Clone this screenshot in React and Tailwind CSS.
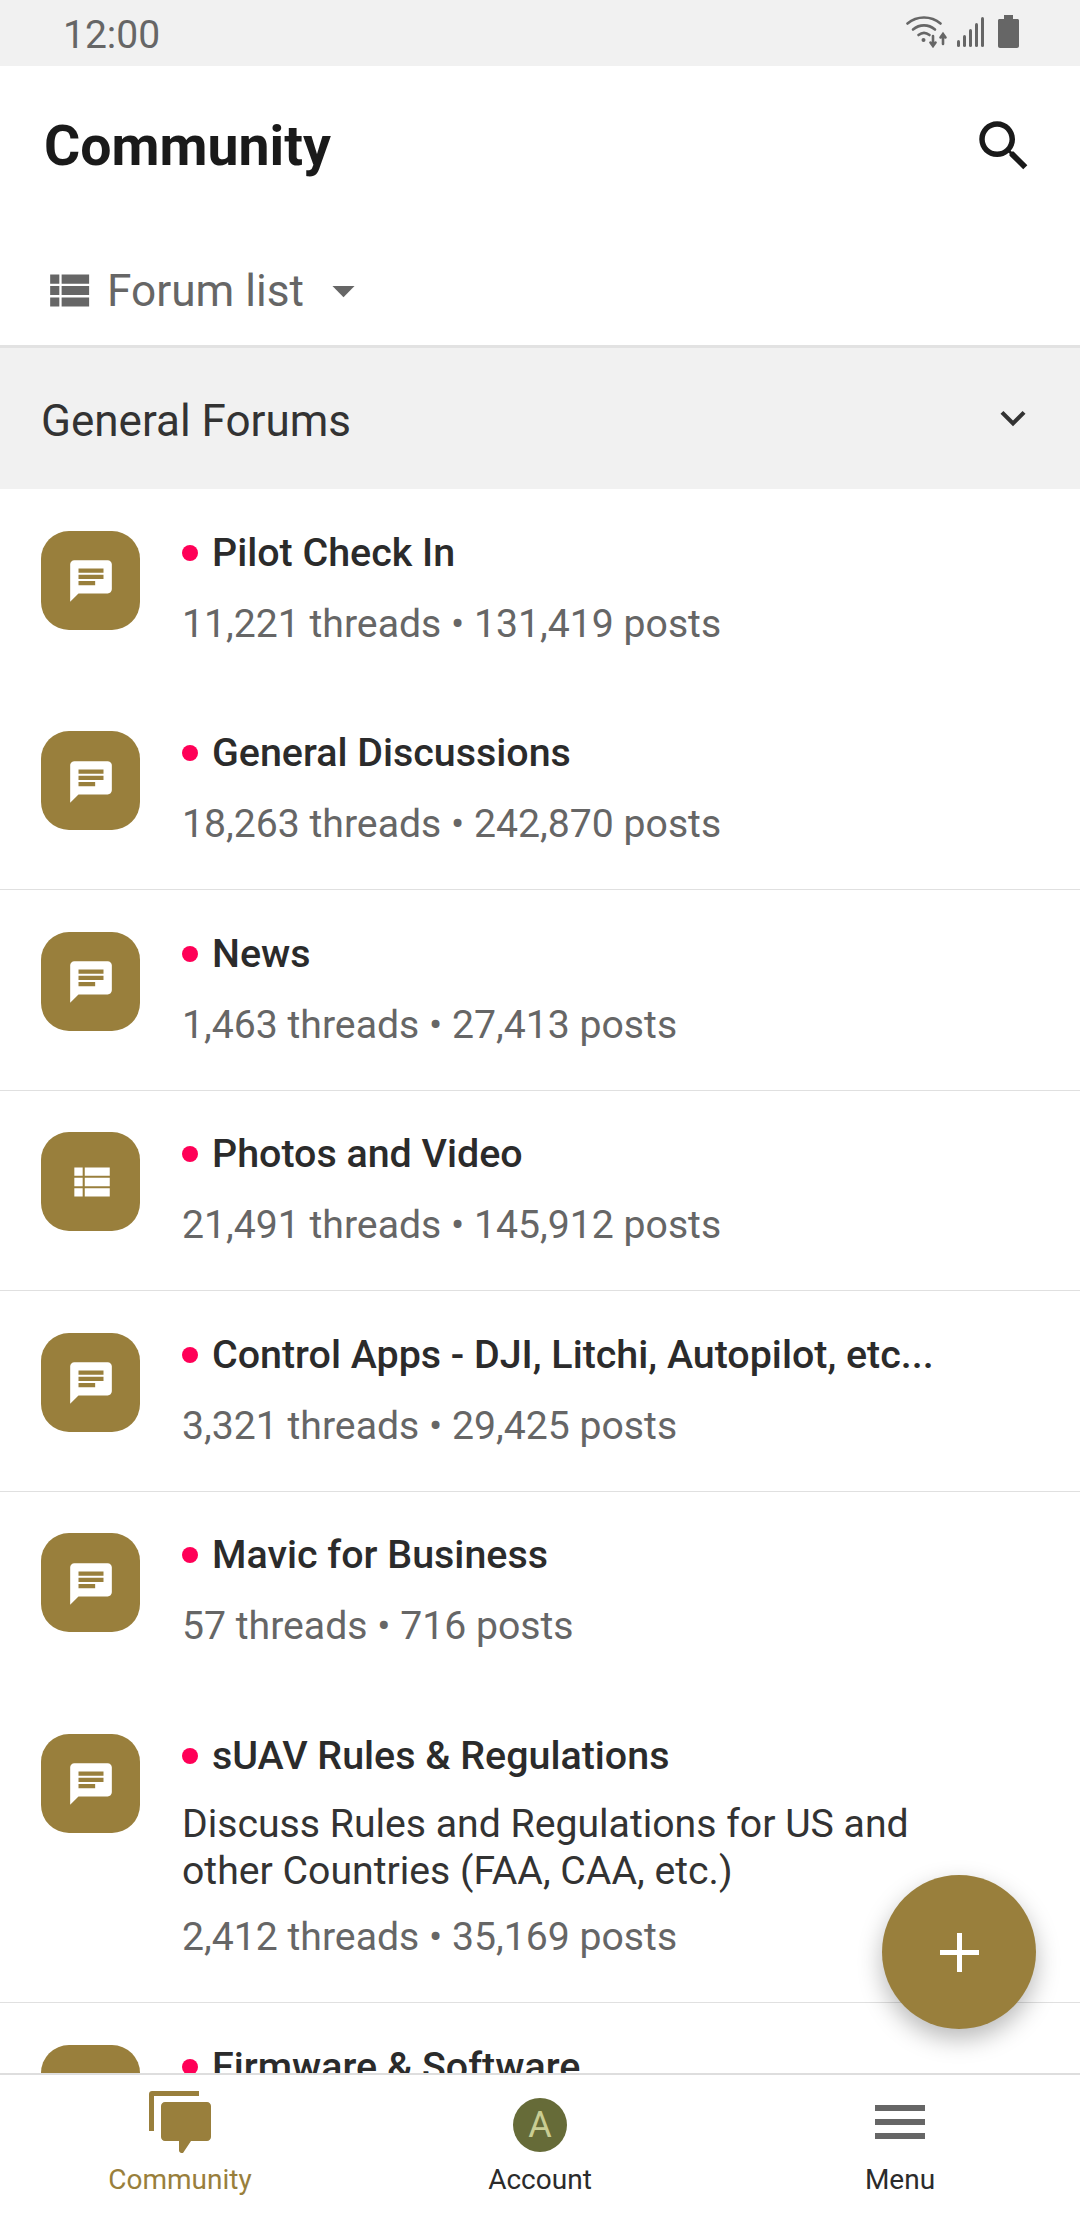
import React from 'react';

const GOLD = 'bg-[#997f3c]';

const forums = [
  { title: 'Pilot Check In', stats: '11,221 threads • 131,419 posts', border: false },
  { title: 'General Discussions', stats: '18,263 threads • 242,870 posts', border: true },
  { title: 'News', stats: '1,463 threads • 27,413 posts', border: true },
  { title: 'Photos and Video', stats: '21,491 threads • 145,912 posts', border: true, list: true },
  { title: 'Control Apps - DJI, Litchi, Autopilot, etc...', stats: '3,321 threads • 29,425 posts', border: true },
  { title: 'Mavic for Business', stats: '57 threads • 716 posts', border: false },
  {
    title: 'sUAV Rules & Regulations',
    description: 'Discuss Rules and Regulations for US and other Countries (FAA, CAA, etc.)',
    stats: '2,412 threads • 35,169 posts',
    border: true,
  },
  // cut off by the bottom nav, only the title shows
  { title: 'Firmware & Software', border: false },
];

const ChatIcon = () => (
  <svg viewBox="0 0 24 24" className="w-[50px] h-[50px] mt-[2px]" fill="#fff">
    <path d="M20 2H4c-1.1 0-1.99.9-1.99 2L2 22l4-4h14c1.1 0 2-.9 2-2V4c0-1.1-.9-2-2-2zM6 9h12v2H6V9zm8 5H6v-2h8v2zm4-6H6V6h12v2z" />
  </svg>
);

const ListIcon = ({ className, fill = '#fff' }) => (
  <svg viewBox="0 0 24 24" className={className} fill={fill}>
    <path d="M4 14h4v-4H4v4zm0 5h4v-4H4v4zM4 9h4V5H4v4zm5 5h12v-4H9v4zm0 5h12v-4H9v4zM9 5v4h12V5H9z" />
  </svg>
);

const StatusIcons = () => (
  <div className="flex items-start gap-[8px] pt-[15px]">
    <svg viewBox="0 0 42 33" className="w-[42px] h-[33px]" fill="none" stroke="#666" strokeWidth="2.6" strokeLinecap="round">
      <path d="M1.500 8.500C11 .5 25 .5 34.500 8.500" />
      <path d="M7 14.500c6.500-5.500 15.500-5.500 22 0" />
      <path d="M12.500 20c3.500-2.800 7.500-2.800 11 0" />
      <circle cx="17.500" cy="25" r="2" fill="#666" stroke="none" />
      <path d="M27 21v9M24.500 27.500L27 31l2.500-3.500" />
      <path d="M37 29v-9M34.500 22.500L37 19l2.500 3.500" />
    </svg>
    <svg viewBox="0 0 28 32" className="w-[28px] h-[32px] mt-px" fill="#666">
      <rect x="1" y="24" width="3" height="7" rx="1.500" />
      <rect x="7" y="19" width="3" height="12" rx="1.500" />
      <rect x="13" y="13" width="3" height="18" rx="1.500" />
      <rect x="19" y="7" width="3" height="24" rx="1.500" />
      <rect x="25" y="1" width="3" height="30" rx="1.500" />
    </svg>
    <svg viewBox="0 0 21 33" className="w-[21px] h-[33px] ml-[6px]" fill="#666">
      <path d="M6 0h9v4h4.500c.8 0 1.500.7 1.500 1.500V31c0 1.100-.9 2-2 2H2c-1.100 0-2-.9-2-2V5.500C0 4.700.7 4 1.500 4H6z" />
    </svg>
  </div>
);

const ForumRow = ({ forum }) => (
  <div className={`shrink-0 flex items-start pl-[41px] pr-[40px] pt-[41.5px] ${forum.description ? 'h-[311px]' : 'h-[200.5px]'} ${forum.border ? 'border-b border-[#e0e0e0]' : ''}`}>
    <div className={`w-[99px] h-[99px] shrink-0 rounded-[28px] ${GOLD} flex items-center justify-center`}>
      {forum.list ? <ListIcon className="w-[50px] h-[50px]" /> : <ChatIcon />}
    </div>
    <div className="ml-[42px] min-w-0 flex-1">
      <div className="flex items-center h-[44px]">
        <span className="w-[16px] h-[16px] rounded-full bg-[#ff0057] shrink-0 mr-[14px]" />
        <span className="text-[39.4px] leading-[44px] font-medium text-[#2b2b2b] whitespace-nowrap">{forum.title}</span>
      </div>
      {forum.description && (
        <p className="mt-[23px] text-[39.2px] leading-[47px] text-[#333] w-[760px]">{forum.description}</p>
      )}
      {forum.stats && (
        <p className={`${forum.description ? 'mt-[20px]' : 'mt-[27px]'} text-[39.2px] leading-[44px] text-[#666] whitespace-nowrap`}>{forum.stats}</p>
      )}
    </div>
  </div>
);

const NavItem = ({ icon, label, active }) => (
  <div className="flex flex-col items-center">
    <div className="h-[78px] flex items-end justify-center">{icon}</div>
    <span className={`mt-[11px] text-[28px] leading-[32px] ${active ? 'text-[#997f3c]' : 'text-[#2b2b2b]'}`}>{label}</span>
  </div>
);

const App = () => {
  return (
    <div className="relative w-[1080px] h-[2220px] overflow-hidden bg-white flex flex-col font-['Roboto',sans-serif]">
      {/* status bar */}
      <div className="h-[66px] shrink-0 bg-[#f1f1f1] flex justify-between pl-[63px] pr-[61px]">
        <span className="text-[39px] leading-[70px] text-[#666]">12:00</span>
        <StatusIcons />
      </div>

      {/* header */}
      <div className="h-[282px] shrink-0 bg-white border-b-[3px] border-[#e2e2e2]">
        <div className="h-[162px] flex items-center justify-between pl-[44px] pr-[43px]">
          <h1 className="text-[55.400px] leading-[64px] font-bold text-[#1a1a1a]">Community</h1>
          <svg viewBox="0 0 24 24" className="w-[66px] h-[66px] -mt-[3px] text-[#1a1a1a]" fill="currentColor">
            <path d="M15.500 14h-.79l-.28-.27C15.410 12.590 16 11.110 16 9.500 16 5.910 13.090 3 9.500 3S3 5.910 3 9.500 5.910 16 9.500 16c1.610 0 3.090-.59 4.230-1.570l.27.28v.79l5 4.990L20.490 19l-4.990-5zm-6 0C7.010 14 5 11.990 5 9.500S7.010 5 9.500 5 14 7.010 14 9.500 11.990 14 9.500 14z" />
          </svg>
        </div>
        <div className="h-[117px] pt-[8px] flex items-center pl-[41px]">
          <ListIcon className="w-[55px] h-[55px]" fill="#666" />
          <span className="ml-[11px] text-[44.200px] leading-[56px] text-[#666]">Forum list</span>
          <svg viewBox="0 0 24 24" className="w-[53px] h-[53px] ml-[13px]" fill="#666">
            <path d="M7 10l5 5 5-5z" />
          </svg>
        </div>
      </div>

      {/* section */}
      <div className="h-[141px] shrink-0 bg-[#f1f1f1] flex items-center justify-between pt-[5px] pl-[41px] pr-[42px]">
        <span className="text-[44px] leading-[50px] text-[#333]">General Forums</span>
        <svg viewBox="0 0 24 24" className="w-[50px] h-[50px] -mt-[6px]" fill="#333">
          <path d="M16.590 8.590L12 13.170 7.410 8.590 6 10l6 6 6-6z" />
        </svg>
      </div>

      {/* forums */}
      <div className="flex-1 min-h-0 overflow-hidden flex flex-col">
        {forums.map((forum) => (
          <ForumRow key={forum.title} forum={forum} />
        ))}
      </div>

      {/* bottom nav */}
      <div className="h-[147px] shrink-0 bg-white border-t-2 border-[#dedede] grid grid-cols-3 relative">
        <NavItem
          active
          label="Community"
          icon={
            <svg viewBox="0 0 62 62" className="w-[62px] h-[62px]" fill="#997f3c">
              <path d="M0 40V3c0-1.700 1.300-3 3-3h47v5H5v35z" />
              <path d="M16 11h42c2.200 0 4 1.800 4 4v31c0 2.200-1.800 4-4 4H42l-8 12h-2c-2-1-2-2-2-3v-9H16c-2.200 0-4-1.800-4-4V15c0-2.200 1.800-4 4-4z" />
            </svg>
          }
        />
        <NavItem
          label="Account"
          icon={
            <div className="w-[54px] h-[54px] rounded-full bg-[#666b38] flex items-center justify-center text-[36px] leading-none text-[#c9cd93] mb-[1px]">
              A
            </div>
          }
        />
        <NavItem
          label="Menu"
          icon={
            <div className="w-[50px] flex flex-col gap-[8px] mb-[14px]">
              <div className="h-[6px] bg-[#666]" />
              <div className="h-[6px] bg-[#666]" />
              <div className="h-[6px] bg-[#666]" />
            </div>
          }
        />
      </div>

      {/* fab */}
      <div className={`absolute left-[882px] top-[1875px] w-[154px] h-[154px] rounded-full ${GOLD} flex items-center justify-center shadow-[0_10px_24px_rgba(0,0,0,0.28)]`}>
        <svg viewBox="0 0 39 39" className="w-[39px] h-[39px]" fill="#fff">
          <path d="M17 0h5v17h17v5H22v17h-5V22H0v-5h17z" />
        </svg>
      </div>
    </div>
  );
};

export default App;
